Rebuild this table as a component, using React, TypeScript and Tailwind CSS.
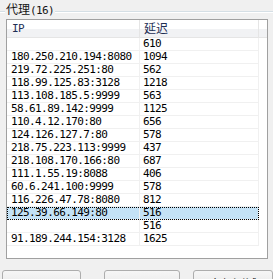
import React from 'react'

interface ProxyRow {
  ip: string
  delay: string
}

const rows: ProxyRow[] = [
  { ip: '', delay: '610' },
  { ip: '180.250.210.194:8080', delay: '1094' },
  { ip: '219.72.225.251:80', delay: '562' },
  { ip: '118.99.125.83:3128', delay: '1218' },
  { ip: '113.108.185.5:9999', delay: '563' },
  { ip: '58.61.89.142:9999', delay: '1125' },
  { ip: '110.4.12.170:80', delay: '656' },
  { ip: '124.126.127.7:80', delay: '578' },
  { ip: '218.75.223.113:9999', delay: '437' },
  { ip: '218.108.170.166:80', delay: '687' },
  { ip: '111.1.55.19:8088', delay: '406' },
  { ip: '60.6.241.100:9999', delay: '578' },
  { ip: '116.226.47.78:8080', delay: '812' },
  { ip: '125.39.66.149:80', delay: '516' },
  { ip: '', delay: '516' },
  { ip: '91.189.244.154:3128', delay: '1625' },
]

const SELECTED = 13

function App() {
  return (
    <div className="w-[273px] h-[279px] overflow-hidden bg-[#f0f0f0] text-black font-['DejaVu_Sans_Mono',monospace]">
      {/* group box caption */}
      <div className="flex items-start h-[19px]">
        <div className="w-[5px] mt-[11px] border-t border-[#d5dfe5] border-b border-b-white h-[2px]" />
        <span className="pt-[2px] px-[1px] text-[12px] leading-[14px] text-[#151515] font-['Noto_Sans_CJK_SC',sans-serif]">
          代理<span className="font-['DejaVu_Sans_Mono',monospace] text-[11px] tracking-[-0.6px]">(16)</span>
        </span>
        <div className="flex-1 mt-[11px] border-t border-[#d5dfe5] border-b border-b-white h-[2px]" />
      </div>

      {/* list view */}
      <div className="ml-[6px] w-[262px] h-[240px] border border-[#a0a0a0] bg-white flex flex-col">
        <div className="flex h-[18px] shrink-0 border-b border-[#e5e5e5] bg-gradient-to-b from-white from-50% to-[#f1f2f4] to-50% text-[#1e2f55]">
          <div className="w-[133px] border-r border-[#e5e5e5] pl-[5px] pt-[2px] text-[11px] leading-[13px] tracking-[-0.6px]">
            IP
          </div>
          <div className="w-[119px] border-r border-[#e5e5e5] pl-[4px] text-[12px] leading-[16px] font-['Noto_Sans_CJK_SC',sans-serif]">
            延迟
          </div>
          <div className="flex-1" />
        </div>
        {rows.map((row, i) => (
          <div key={i} className="flex h-[13px] shrink-0 text-[11px] leading-[12px] tracking-[-0.6px]">
            <div
              className={
                i === SELECTED
                  ? 'flex w-[252px] bg-[#c4e2f6] outline-1 outline-dotted outline-black -outline-offset-1'
                  : 'flex w-[252px]'
              }
            >
              <div className="w-[133px] border-r border-b border-[#f0f0f0] pl-[4px] whitespace-nowrap">{row.ip}</div>
              <div className="w-[119px] border-r border-b border-[#f0f0f0] pl-[3px]">{row.delay}</div>
            </div>
            <div className="flex-1" />
          </div>
        ))}
      </div>

      {/* buttons */}
      <div className="flex mt-[11px] text-[12px] font-['Noto_Sans_CJK_SC',sans-serif]">
        <button className="ml-[2px] w-[82px] h-[23px] rounded-[3px] border border-[#adadad] bg-gradient-to-b from-[#f6f6f6] to-[#e4e4e4]" />
        <button className="ml-[23px] w-[79px] h-[23px] rounded-[3px] border border-[#adadad] bg-gradient-to-b from-[#f6f6f6] to-[#e4e4e4]" />
        <button className="ml-[13px] w-[80px] h-[23px] shrink-0 rounded-[3px] border border-[#adadad] bg-gradient-to-b from-[#f6f6f6] to-[#e4e4e4] leading-[14px] pt-[5px] text-[#111]">
          全部测试
        </button>
      </div>
    </div>
  )
}

export default App
